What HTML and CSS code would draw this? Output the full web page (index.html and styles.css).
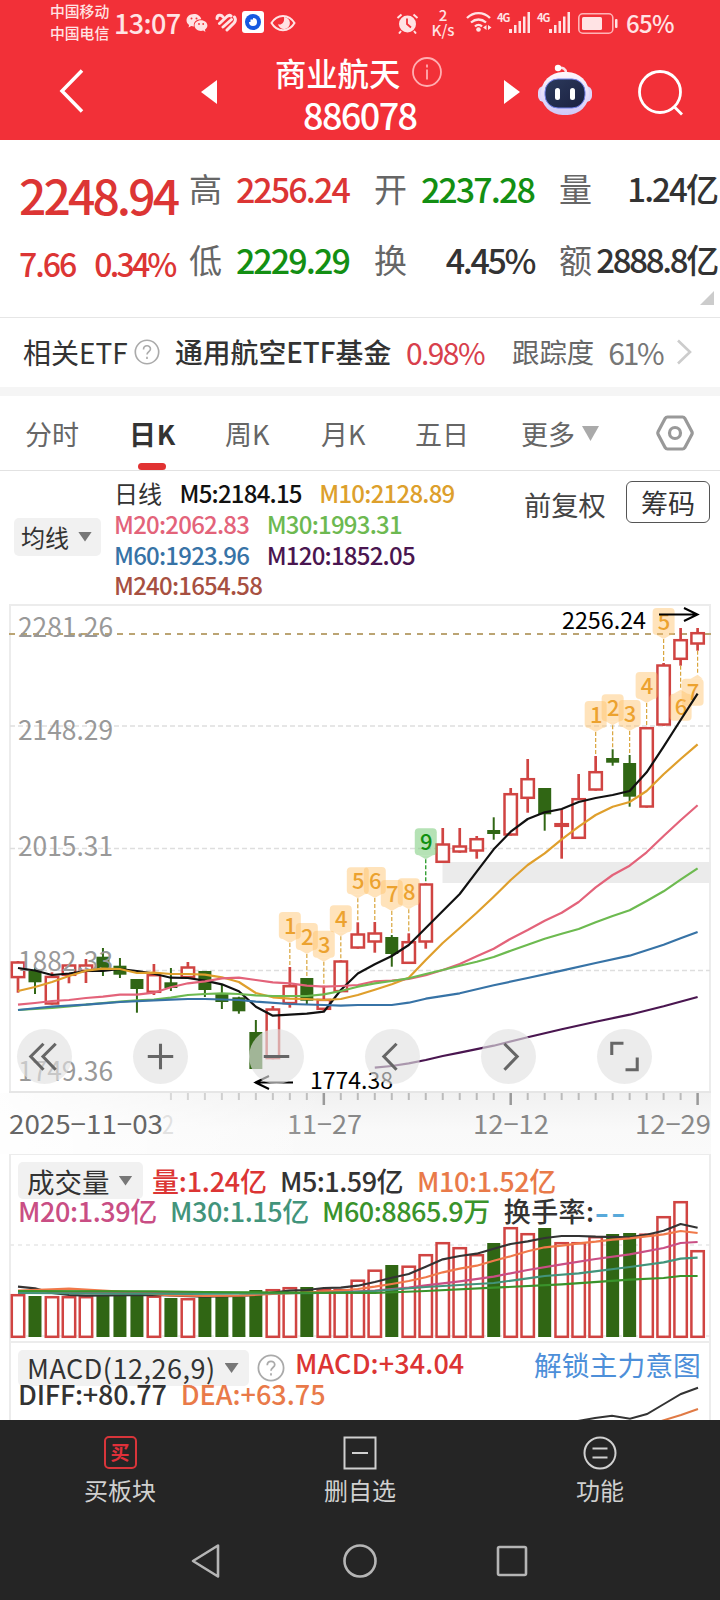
FILE: index.html
```html
<!DOCTYPE html>
<html lang="zh-CN">
<head>
    <meta charset="UTF-8">
    <meta name="viewport" content="width=device-width, initial-scale=1.0">
    <title>商业航天 886078</title>
    <link rel="stylesheet" href="styles.css">
</head>
<body>

    <header class="top">
        <div class="status">
            <div class="carrier"><span>中国移动</span><span>中国电信</span></div>
            <span class="clock">13:07</span>
            <svg class="st-wechat" width="22" height="20" viewBox="0 0 22 20">
                <path d="M8 1C3.600 1 .5 3.800.5 7.200c0 2 1 3.600 2.600 4.700L2.500 14.500l2.800-1.500c.9.300 1.700.4 2.700.4C7 9 10.500 6 15.300 6.200 14.500 3 11.500 1 8 1z"/>
                <path d="M15 7.300c-3.600 0-6.500 2.300-6.500 5.300s2.900 5.300 6.500 5.300c.8 0 1.500-.1 2.200-.3l2.300 1.300-.6-2.100c1.500-1 2.500-2.500 2.500-4.200 0-3-2.800-5.300-6.400-5.300z"/>
                <g fill="#f23038"><circle cx="5.500" cy="5.500" r="1"/><circle cx="10.500" cy="5.500" r="1"/><circle cx="13" cy="11" r=".9"/><circle cx="17.200" cy="11" r=".9"/></g>
            </svg>
            <svg class="st-heart" width="22" height="20" viewBox="0 0 22 20" fill="none" stroke-width="3" stroke-linecap="round">
                <path d="M2 5.500C2 2 6 1 8 4M4.500 10.500L12 3.500c1.500-1.300 3-1.300 4-.5M8 14l8.500-7.500M12 17l7-7c1.500-1.800 1.500-4.500.5-6"/>
            </svg>
            <svg class="st-app" width="22" height="22" viewBox="0 0 22 22">
                <rect width="22" height="22" rx="3"/><circle cx="11" cy="11" r="8" fill="#1759e0"/><path fill="#fff" d="M11 7a4 4 0 1 1-4 4h1.500V8.500H11z"/>
            </svg>
            <svg class="st-eye" width="26" height="18" viewBox="0 0 26 18">
                <path fill="none" stroke="#ffe3e4" stroke-width="2" d="M1.500 9C7-.5 19-.5 24.500 9 19 18.500 7 18.500 1.500 9z"/><path d="M14 3a6 6 0 1 1-6 7c2 1.500 7 0 6-7z"/>
            </svg>
            <svg class="st-alarm" width="23" height="21" viewBox="0 0 23 21">
                <circle cx="11.500" cy="11" r="8.500"/><path fill="none" stroke="#ffe3e4" stroke-width="2" d="M1.500 5l4-3.500M21.500 5l-4-3.500M5 18l-2 2.500M18 18l2 2.500"/><path fill="none" stroke="#f23038" stroke-width="1.800" d="M11 5.500V11l4 3.500"/>
            </svg>
            <div class="speed"><span>2</span><span>K/s</span></div>
            <svg class="st-wifi" width="26" height="22" viewBox="0 0 26 22">
                <path fill="none" stroke="#ffe3e4" stroke-width="2.300" d="M1 7C7.500.5 17.500.5 24 7M5 11.500c4.500-4 10.500-4 15 0M9 15.500c2-2 5-2 7 0"/><circle cx="12.500" cy="18.500" r="2.300"/><path d="M20.500 14v5L17 16.500zM22 14v5l3.500-2.500z"/>
            </svg>
            <div class="signal"><span>4G</span><svg width="22" height="21" viewBox="0 0 22 21"><path d="M0 17h3v4H0zM5 13h2.500v8H5zM9.500 9H12v12H9.500zM14 4.500h2.500V21H14zM18.500 0H21v21h-2.500z"/></svg></div>
            <div class="signal"><span>4G</span><svg width="22" height="21" viewBox="0 0 22 21"><path d="M0 17h3v4H0zM5 13h2.500v8H5zM9.500 9H12v12H9.500zM14 4.500h2.500V21H14zM18.500 0H21v21h-2.500z"/></svg></div>
            <svg class="st-battery" width="40" height="21" viewBox="0 0 40 21">
                <rect x=".8" y=".8" width="34" height="19.400" rx="4" fill="none" stroke="#ffb3b6" stroke-width="1.600"/><rect x="4" y="4" width="20" height="13" rx="1.500"/><rect x="37" y="6" width="2.500" height="9" rx="1"/>
            </svg>
            <span class="percent">65%</span>
        </div>
        <div class="titlebar">
            <svg class="back" width="26" height="46" viewBox="0 0 26 46"><path d="M23 2.500L3 23l20 20.500"/></svg>
            <span class="prev"></span>
            <div class="title">
                <div class="name">商业航天
                    <svg width="30" height="30" viewBox="0 0 30 30"><circle cx="15" cy="15" r="14"/><path d="M15 12.500v10M15 7.500v3"/></svg>
                </div>
                <div class="code">886078</div>
            </div>
            <span class="next"></span>
            <svg class="robot" width="54" height="52" viewBox="0 0 54 52">
                <defs>
                    <linearGradient id="shell" x1="0" y1="0" x2="0" y2="1"><stop offset="0" stop-color="#fff6fb"/><stop offset="1" stop-color="#cfc8f8"/></linearGradient>
                    <linearGradient id="face" x1="0" y1="0" x2="1" y2="1"><stop offset="0" stop-color="#2c3a5c"/><stop offset="1" stop-color="#1a2040"/></linearGradient>
                </defs>
                <path d="M20 4c5-1 8 1 8 5" fill="none" stroke="#fbdfe6" stroke-width="2.500"/><circle cx="20" cy="4" r="3.200" fill="#fff"/>
                <rect x="0" y="22" width="54" height="16" rx="6" fill="#ded6fa"/>
                <rect x="3" y="8" width="48" height="43" rx="21.500" fill="url(#shell)"/>
                <rect x="7" y="15" width="40" height="29" rx="13" fill="url(#face)" stroke="#6f7fe8" stroke-width="1"/>
                <rect x="17" y="24" width="5" height="12" rx="2.500" fill="#fff"/><rect x="32" y="24" width="5" height="12" rx="2.500" fill="#fff"/>
            </svg>
            <svg class="search" width="48" height="48" viewBox="0 0 48 48"><circle cx="22" cy="22" r="20.500"/><path d="M36 36.500l8 8"/></svg>
        </div>
    </header>

    <section class="quote">
        <div class="price">
            <div class="last red">2248.94</div>
            <div class="change red"><span>7.66</span><span>0.34%</span></div>
        </div>
        <dl class="pair p1"><dt>高</dt><dd class="red">2256.24</dd><dt>低</dt><dd class="green">2229.29</dd></dl>
        <dl class="pair p2"><dt>开</dt><dd class="green">2237.28</dd><dt>换</dt><dd class="rate">4.45%</dd></dl>
        <dl class="pair p3"><dt>量</dt><dd>1.24亿</dd><dt>额</dt><dd class="tight">2888.8亿</dd></dl>
        <i class="corner"></i>
    </section>

    <section class="etf">
        <span class="etf-label">相关ETF</span>
        <svg class="help" width="26" height="26" viewBox="0 0 30 30"><circle cx="15" cy="15" r="13.500"/><path d="M11 12c0-5.500 8-5.500 8-.5 0 3-4 3-4 6.500M15 20.500v2.500"/></svg>
        <span class="etf-name">通用航空ETF基金</span>
        <span class="etf-rate">0.98%</span>
        <span class="etf-track">跟踪度</span>
        <span class="etf-pct">61%</span>
        <svg class="more" width="16" height="26" viewBox="0 0 16 26"><path d="M2 1.500L14 13 2 24.500"/></svg>
    </section>

    <nav class="tabs">
        <span class="t1">分时</span>
        <span class="t2 active">日K</span>
        <span class="t3">周K</span>
        <span class="t4">月K</span>
        <span class="t5">五日</span>
        <span class="t6">更多<i></i></span>
        <svg class="gear" width="38" height="38" viewBox="0 0 38 38"><path d="M11.500 3h15q1.500 0 2.300 1.300l7 13.200q.8 1.500 0 3l-7 13.200Q28 35 26.500 35h-15q-1.500 0-2.300-1.300l-7-13.200q-.8-1.500 0-3l7-13.200Q10 3 11.500 3z"/><circle cx="19" cy="19" r="5.500"/></svg>
    </nav>

    <section class="legend">
        <span class="pill ma-pill">均线<i></i></span>
        <div class="ma">
            <div><span class="day">日线</span><span class="m5">M5:2184.15</span><span class="m10">M10:2128.89</span></div>
            <div><span class="m20">M20:2062.83</span><span class="m30">M30:1993.31</span></div>
            <div><span class="m60">M60:1923.96</span><span class="m120">M120:1852.05</span></div>
            <div><span class="m240">M240:1654.58</span></div>
        </div>
        <span class="adjust">前复权</span>
        <span class="chips">筹码</span>
    </section>

    <section class="kline">
        <svg id="kline" width="720" height="550" viewBox="0 604 720 550"></svg>
        <div class="tools">
            <span><svg viewBox="0 0 54 54"><path d="M26 14.500L13.500 27 26 40M38 14.500L25.500 27 38 40"/></svg></span>
            <span><svg viewBox="0 0 54 54"><path d="M27 14.500v25M14.500 27h25"/></svg></span>
            <span><svg viewBox="0 0 54 54"><path d="M14.500 27h25"/></svg></span>
            <span><svg viewBox="0 0 54 54"><path d="M31 14.500L18.500 27 31 40"/></svg></span>
            <span><svg viewBox="0 0 54 54"><path d="M23 14.500L35.500 27 23 40"/></svg></span>
            <span><svg viewBox="0 0 54 54"><path d="M26 14H14.500v11.500M28 40h11.500V28"/></svg></span>
        </div>
    </section>

    <section class="volume">
        <svg id="volume" width="720" height="187" viewBox="0 1154 720 187"></svg>
        <div class="row v-row1">
            <span class="pill vol-pill">成交量<i></i></span>
            <span class="red v0">量:1.24亿</span><span class="v5">M5:1.59亿</span><span class="v10">M10:1.52亿</span>
        </div>
        <div class="row v-row2">
            <span class="v20">M20:1.39亿</span><span class="v30">M30:1.15亿</span><span class="v60">M60:8865.9万</span><span class="turn">换手率:</span><span class="dash">--</span>
        </div>
    </section>

    <section class="macd">
        <svg id="macd" width="720" height="79" viewBox="0 1341 720 79"></svg>
        <div class="row m-row1">
            <span class="pill macd-pill">MACD(12,26,9)<i></i></span>
            <svg class="help big" width="28" height="28" viewBox="0 0 30 30"><circle cx="15" cy="15" r="13.500"/><path d="M11 12c0-5.500 8-5.500 8-.5 0 3-4 3-4 6.500M15 20.500v2.500"/></svg>
            <span class="red macd-val">MACD:+34.04</span>
            <span class="unlock">解锁主力意图</span>
        </div>
        <div class="row m-row2"><span class="diff">DIFF:+80.77</span><span class="v10 dea">DEA:+63.75</span></div>
    </section>

    <footer class="bottom">
        <div class="actions">
            <div class="buy">
                <span class="buy-icon">买</span>
                买板块
            </div>
            <div>
                <svg width="34" height="34" viewBox="0 0 34 34"><rect x="1.500" y="1.500" width="31" height="31"/><path d="M9 17h16"/></svg>
                删自选
            </div>
            <div>
                <svg width="34" height="34" viewBox="0 0 34 34"><circle cx="17" cy="17" r="15.500"/><path d="M9.500 12.500h15M9.500 21.500h15"/></svg>
                功能
            </div>
        </div>
        <div class="keys">
            <svg width="34" height="36" viewBox="0 0 34 36"><path d="M30 2.500v31L5 18z"/></svg>
            <svg width="36" height="36" viewBox="0 0 36 36"><circle cx="18" cy="18" r="15.500"/></svg>
            <svg width="34" height="34" viewBox="0 0 34 34"><rect x="3" y="3" width="28" height="28" rx="1.500"/></svg>
        </div>
    </footer>

    <script src="chart.js"></script>
</body>
</html>
```
FILE: styles.css
```css
* {
    box-sizing: border-box;
}

body {
    font-family: "Noto Sans CJK SC", sans-serif;
    margin: 0;
    width: 720px;
    height: 1600px;
    overflow: hidden;
    background: #fff;
    color: #333;
    line-height: 1;
    white-space: nowrap;
}

svg {
    display: block;
    flex: none;
}

.red { color: #dc3534; }
.green { color: #138f13; }

/* header */
.top {
    height: 140px;
    background: #f23038;
    color: #fff;
}

.status {
    display: flex;
    align-items: center;
    height: 46px;
    padding-left: 50px;
    color: #ffe3e4;
    fill: #ffe3e4;
}

.carrier {
    display: flex;
    flex-direction: column;
    width: 60px;
    padding-bottom: 1px;
    font-size: 14.8px;
    font-weight: 500;
    gap: 7px;
}

.clock {
    width: 70px;
    margin-left: 4px;
    padding-bottom: 2px;
    font-size: 27px;
    font-weight: 500;
    letter-spacing: -0.6px;
}

.st-wechat { margin-left: 2px; }
.st-heart { margin-left: 7px; stroke: #ffe3e4; }
.st-app { margin-left: 5px; margin-bottom: 2px; fill: #fff; }
.st-eye { margin-left: 6px; }
.st-alarm { margin-left: 100px; }

.speed {
    display: flex;
    flex-direction: column;
    align-items: center;
    width: 24px;
    margin-left: 12px;
    padding-bottom: 2px;
    font-size: 15px;
    font-weight: 500;
}

.st-wifi { margin-left: 11px; margin-bottom: 2px; }

.signal {
    display: flex;
    width: 34px;
    margin-left: 5px;
    margin-bottom: 2px;
}

.signal + .signal { margin-left: 6px; }

.signal span {
    width: 12px;
    font-size: 11px;
    font-weight: 700;
    letter-spacing: -1px;
    line-height: 10px;
}

.st-battery { margin-left: 7px; }

.percent {
    margin-left: 8px;
    font-size: 24px;
    font-weight: 500;
    letter-spacing: -0.7px;
}

.titlebar {
    display: flex;
    height: 94px;
}

.back {
    margin: 22px 0 0 59px;
    fill: none;
    stroke: #fff;
    stroke-width: 3.5;
}

.prev,
.next {
    width: 16px;
    height: 24px;
    margin-top: 34px;
    background: #fff;
}

.prev {
    margin-left: 116px;
    clip-path: polygon(100% 0, 0 50%, 100% 100%);
}

.next {
    margin-left: 57px;
    clip-path: polygon(0 0, 100% 50%, 0 100%);
}

.title {
    width: 172px;
    margin-left: 58px;
}

.name {
    display: flex;
    height: 50px;
    padding-top: 11px;
    font-size: 31.3px;
    font-weight: 500;
}

.name svg {
    margin: 0 0 0 12px;
    fill: none;
    stroke: #ffaeb1;
    stroke-width: 1.8;
}

.code {
    padding-left: 28px;
    font-size: 36px;
    font-weight: 500;
    letter-spacing: -1.6px;
}

.robot { margin: 18px 0 0 18px; }

.search {
    margin: 24px 0 0 46px;
    fill: none;
    stroke: #fff;
    stroke-width: 2.8;
}

/* quote */
.quote {
    position: relative;
    display: flex;
    height: 178px;
    border-bottom: 1px solid #e6e6e6;
}

.price {
    width: 190px;
    padding-left: 19px;
    font-weight: 500;
}

.last {
    height: 98px;
    padding-top: 30px;
    font-size: 48px;
    letter-spacing: -2.9px;
}

.change {
    display: flex;
    font-size: 32px;
    gap: 19px;
    padding-top: 9px;
    letter-spacing: -2px;
}

.change span + span { letter-spacing: -2.8px; }

.pair {
    display: grid;
    grid-template-columns: 34px 1fr;
    grid-auto-rows: 71px;
    margin: 32px 0 0;
}

.p1 { width: 160px; margin-left: -1px; }
.p2 { width: 160px; margin-left: 25px; }
.p3 { width: 160px; margin-left: 25px; }

dt {
    font-size: 33px;
    color: #666;
}

dd {
    margin: 0;
    text-align: right;
    font-size: 34px;
    font-weight: 500;
    letter-spacing: -1.9px;
}

.rate { letter-spacing: -2.4px; }
.p3 dd { font-size: 33px; padding-right: 2px; }
.p3 .tight { letter-spacing: -2.3px; }

.corner {
    position: absolute;
    right: 6px;
    top: 151px;
    width: 14px;
    height: 14px;
    background: #ccc;
    clip-path: polygon(100% 0, 100% 100%, 0 100%);
}

/* related fund */
.etf {
    display: flex;
    align-items: center;
    height: 69px;
    padding: 0 0 2px 23px;
    font-size: 27px;
}

.etf-label { width: 104px; font-size: 28px; }

.help {
    margin: 1px 0 0 7px;
    fill: none;
    stroke: #aaa;
    stroke-width: 1.9;
}

.etf-name {
    width: 218px;
    margin-left: 15px;
    font-size: 27.8px;
    font-weight: 500;
}

.etf-rate {
    width: 78px;
    margin-left: 13px;
    font-size: 30px;
    letter-spacing: -1.6px;
    color: #d8404c;
}

.etf-track {
    margin-left: 28px;
    color: #666;
    font-size: 27.4px;
}

.etf-pct {
    width: 56px;
    margin-left: 14px;
    font-size: 30px;
    letter-spacing: -2.2px;
    color: #777;
}

.more {
    margin: 1px 0 0 12px;
    fill: none;
    stroke: #ccc;
    stroke-width: 2.6;
}

/* period tabs */
.tabs {
    display: flex;
    height: 84px;
    border-top: 9px solid #f5f5f5;
    border-bottom: 1px solid #e2e2e2;
    font-size: 27px;
    color: #666;
}

.tabs span {
    padding-top: 24px;
}

.t1 { width: 55px; margin-left: 25px; }
.t2 { width: 48px; margin-left: 49px; }
.t3 { width: 46px; margin-left: 48px; }
.t4 { width: 46px; margin-left: 50px; }
.t5 { width: 54px; margin-left: 48px; }

.t6 {
    display: flex;
    width: 80px;
    margin-left: 52px;
}

.t6 i {
    width: 17px;
    height: 15px;
    margin: 6px 0 0 7px;
    background: #aaa;
    clip-path: polygon(0 0, 100% 0, 50% 100%);
}

.tabs .active {
    position: relative;
    font-weight: 700;
    color: #333;
    letter-spacing: 0.7px;
}

.active::after {
    content: "";
    position: absolute;
    left: 9px;
    bottom: 0;
    width: 28px;
    height: 7px;
    border-radius: 3.5px;
    background: #e13232;
}

.gear {
    margin: 18px 0 0 55px;
    fill: none;
    stroke: #999;
    stroke-width: 3.2;
}

/* moving average legend */
.legend {
    display: flex;
    height: 133px;
    padding-left: 14px;
}

.pill {
    display: flex;
    align-items: center;
    background: #f1f1f1;
    border-radius: 5px;
}

.pill i {
    width: 14px;
    height: 10px;
    background: #777;
    clip-path: polygon(0 0, 100% 0, 50% 100%);
}

.ma-pill {
    width: 87px;
    height: 38px;
    margin-top: 47px;
    padding: 0 0 1px 7px;
    font-size: 24px;
    gap: 9px;
}

.ma {
    width: 410px;
    margin-left: 13px;
    padding-top: 8px;
    font-size: 24px;
    font-weight: 500;
    letter-spacing: -0.77px;
}

.ma div {
    display: flex;
    height: 30.8px;
    line-height: 28px;
    gap: 17.5px;
}

.day { font-weight: 400; letter-spacing: 0; }
.m5 { color: #111; }
.m10 { color: #dda02c; }
.m20 { color: #e3637a; }
.m30 { color: #6db951; }
.m60 { color: #3773a6; }
.m120 { color: #4a1650; }
.m240 { color: #a75041; }

.adjust {
    padding-top: 20px;
    font-size: 27.3px;
    color: #444;
}

.chips {
    width: 84px;
    height: 42px;
    margin: 10px 0 0 20px;
    padding-top: 7px;
    border: 1.5px solid #555;
    border-radius: 6px;
    text-align: center;
    font-size: 27px;
}

/* candle chart */
.kline {
    position: relative;
    height: 550px;
}

.tools {
    position: absolute;
    left: 17px;
    top: 425px;
    display: flex;
    gap: 61px;
}

.tools span {
    width: 55px;
    height: 55px;
    border-radius: 50%;
    background: rgba(225, 225, 225, 0.64);
}

.tools svg {
    fill: none;
    stroke: #666;
    stroke-width: 3;
}

/* volume and macd */
.volume,
.macd {
    position: relative;
}

.volume { height: 187px; }

.macd {
    height: 79px;
    overflow: hidden;
}

.volume > svg,
.macd > svg {
    position: absolute;
    left: 0;
    top: 0;
}

.row {
    position: relative;
    display: flex;
    font-size: 27px;
    font-weight: 500;
}

.v-row1 {
    height: 46px;
    padding: 8px 0 0 18px;
    line-height: 38px;
}

.vol-pill {
    width: 125px;
    height: 37px;
    padding-left: 9px;
    font-size: 27.5px;
    font-weight: 400;
    gap: 9px;
}

.v-row1 .v0 { width: 116px; margin-left: 9px; letter-spacing: -0.2px; }
.v-row1 .v5 { width: 122px; margin-left: 12px; letter-spacing: -0.5px; }
.v-row1 .v10 { margin-left: 15px; letter-spacing: -0.4px; }
.v-row2 { padding-left: 18px; line-height: 22px; letter-spacing: -0.4px; }
.v-row2 span { width: 138px; margin-right: 14px; }
.v-row2 .v60 { width: 168px; margin-right: 14px; letter-spacing: -0.5px; }
.v-row2 .turn { width: 93px; margin-right: 0; letter-spacing: 0.4px; }
.v-row2 .dash { font-size: 42px; font-weight: 400; line-height: 18px; letter-spacing: 2px; }
.v10 { color: #e97a49; }
.v20 { color: #c94e84; }
.v30 { color: #42947b; }
.v60 { color: #3a932b; }
.dash { color: #58a9da; }

.m-row1 {
    height: 43px;
    padding: 9px 0 0 18px;
    line-height: 26px;
}

.macd-pill {
    width: 231px;
    height: 36px;
    padding-left: 9px;
    gap: 9px;
    letter-spacing: 0.5px;
    font-weight: 400;
}

.big { margin: 4px 0 0 8px; }
.macd-val { width: 237px; margin-left: 10px; letter-spacing: 0.1px; }
.unlock { margin-left: 2px; color: #4d8fd9; font-size: 27.8px; font-weight: 400; line-height: 28px; }
.m-row2 { padding-left: 18px; line-height: 20px; letter-spacing: -0.2px; }
.dea { margin-left: 14px; letter-spacing: 0; }

/* bottom bars */
.bottom {
    position: relative;
    height: 180px;
    background: #252525;
}

.actions {
    display: flex;
    height: 108px;
    padding-top: 16px;
    color: #d0d0d0;
    font-size: 24px;
}

.actions div {
    display: flex;
    flex-direction: column;
    align-items: center;
    width: 240px;
    gap: 8px;
}

.actions svg {
    fill: none;
    stroke: #d0d0d0;
    stroke-width: 2;
}

.buy-icon {
    width: 33px;
    height: 33px;
    margin-bottom: 1px;
    border: 2px solid #d8353a;
    border-radius: 5px;
    color: #e0303a;
    font-size: 19px;
    font-weight: 700;
    line-height: 28px;
    text-align: center;
}

.keys {
    display: flex;
    align-items: center;
    padding: 15px 0 0 188px;
    fill: none;
    stroke: #b5b5b5;
    stroke-width: 2.6;
    stroke-linejoin: round;
}

.keys svg + svg { margin-left: 120px; }
.keys svg:last-child { margin-left: 117px; }

/* chart text */
.axis { font-size: 27px; fill: #999; }
.date { font-size: 26px; fill: #888; }
.peak { font-size: 23.500px; fill: #000; }
.mark { font-size: 22px; font-weight: 500; }
```
FILE: chart.js
```js
// type, high, body top, body bottom, low
var candles = [
    ["r", 961, 961.3, 978.3, 992.7], ["g", 967.3, 970.3, 982.3, 994], ["r", 972.3, 975.7, 1004.7, 1004.7],
    ["r", 964, 964.3, 976, 983.3], ["r", 959, 964.3, 972, 983], ["g", 948, 956.7, 970, 976],
    ["g", 958, 965.7, 974.7, 978], ["g", 979, 979, 989, 1012.7], ["r", 964, 974, 993, 995],
    ["g", 968, 982.3, 988, 991], ["r", 962, 966.3, 978.3, 978.3], ["g", 971, 971, 990, 997],
    ["g", 984.7, 993.3, 1002, 1009], ["g", 996.7, 997.3, 1011.3, 1013.7], ["g", 1020, 1032, 1069, 1069],
    ["r", 1006, 1008.3, 1059.3, 1059.3], ["r", 967, 985, 1004.3, 1007.7], ["g", 978, 978, 1000.7, 1004],
    ["r", 985.7, 998.7, 1010, 1011], ["r", 960.3, 960.3, 992.3, 992.3], ["r", 922.3, 933.3, 948.7, 948.7],
    ["r", 922, 932.3, 942.7, 952.7], ["g", 935, 937, 954, 966.7], ["r", 933.3, 941, 964, 964],
    ["r", 883.3, 883.3, 942.7, 948.7], ["r", 828, 843.3, 863, 863], ["r", 828, 845.3, 852.7, 852.7],
    ["r", 836, 838, 851.7, 858.7], ["g", 817.3, 830, 834, 839.7], ["r", 788, 793, 835.7, 835.7],
    ["r", 759, 778, 799, 812.7], ["g", 788, 788, 814.3, 830.7], ["r", 809.3, 823, 827, 858.7],
    ["r", 774, 798, 839, 839], ["r", 756, 771, 790.7, 790.7], ["g", 749.3, 758, 762.7, 765.7],
    ["g", 755, 763, 796.7, 806.7], ["r", 727, 727, 807.7, 807.7], ["r", 663, 664.3, 725.7, 725.7],
    ["r", 628, 639, 660, 665.7], ["r", 628, 632, 644.7, 650.7]
];

var volumes = [
    1294, 1296, 1296, 1296, 1296, 1295, 1295, 1295.5, 1295.5, 1298, 1298, 1296, 1296, 1296.7,
    1290, 1289, 1287, 1287, 1288.5, 1289, 1279.5, 1269.5, 1265, 1265.5, 1254, 1242, 1247, 1254,
    1243, 1227, 1233, 1228, 1242, 1242, 1236, 1234, 1233, 1233.5, 1216, 1201, 1250
];

var NS = "http://www.w3.org/2000/svg";
var RED = "#d04442";
var GREEN = "#306614";

function px(i) {
    return 18 + i * 16.99;
}

function add(parent, name, attrs, text) {
    var el = document.createElementNS(NS, name);
    for (var k in attrs) {
        el.setAttribute(k, attrs[k]);
    }
    if (text) {
        el.textContent = text;
    }
    parent.appendChild(el);
    return el;
}

function hline(svg, x1, x2, y, color, width, dash) {
    add(svg, "line", { x1: x1, x2: x2, y1: y, y2: y, stroke: color, "stroke-width": width, "stroke-dasharray": dash || "none" });
}

function vline(svg, x, y1, y2, color, width, dash) {
    add(svg, "line", { x1: x, x2: x, y1: y1, y2: y2, stroke: color, "stroke-width": width, "stroke-dasharray": dash || "none" });
}

function label(svg, cls, x, y, w, text, extra) {
    var attrs = { "class": cls, x: x, y: y, textLength: w, lengthAdjust: "spacingAndGlyphs" };
    for (var k in extra) {
        attrs[k] = extra[k];
    }
    add(svg, "text", attrs, text);
}

// values is a flat list of index, y
function curve(svg, values, color, width) {
    var pts = [];
    for (var i = 0; i < values.length; i += 2) {
        pts.push(px(values[i]) + "," + values[i + 1]);
    }
    add(svg, "polyline", { points: pts.join(" "), fill: "none", stroke: color, "stroke-width": width || 2.2, "stroke-linejoin": "round" });
}

// one y for every candle starting at index "from"
function series(from, ys) {
    var out = [];
    ys.forEach(function (y, i) {
        out.push(from + i, y);
    });
    return out;
}

function frame(svg, top, bottom) {
    hline(svg, 9, 711, top, "#ececec", 2);
    vline(svg, 10, top, bottom, "#ececec", 2);
    vline(svg, 710, top, bottom, "#ececec", 2);
}

function box(svg, i, type, top, bottom) {
    if (type == "g") {
        add(svg, "rect", { x: px(i) - 6.5, y: top, width: 13, height: bottom - top, fill: GREEN });
    } else {
        add(svg, "rect", { x: px(i) - 6.2, y: top + 1.2, width: 12.4, height: Math.max(bottom - top - 2.4, 1), fill: "#fff", stroke: RED, "stroke-width": 2.5 });
    }
}

function marker(svg, i, n, below) {
    var x = px(i);
    var c = candles[i];
    var nine = n == 9;
    var dir = below ? -1 : 1;
    var end = below ? c[4] : c[1];
    var tip = end - 24 * dir;
    var mx = i == 40 ? x - 5 : x;
    vline(svg, x, Math.min(tip, end), Math.max(tip, end), nine ? "#138f13" : "#d9a53c", 1.2, "4 2");
    add(svg, "rect", { x: mx - 11, y: below ? tip + 4 : tip - 31, width: 22, height: 27, rx: 4, fill: nine ? "#6cc66c" : "#ffc069", "fill-opacity": nine ? 0.5 : 0.45 });
    add(svg, "path", { d: "M" + (x - 7) + " " + (tip - 4 * dir) + "L" + x + " " + tip + "L" + (x + (i == 40 ? 5 : 7)) + " " + (tip - 4 * dir) + "z", fill: nine ? "#6cc66c" : "#ffc069", "fill-opacity": nine ? 0.5 : 0.45 });
    add(svg, "text", { "class": "mark", x: mx + 0.5, y: below ? tip + 25 : tip - 9, "text-anchor": "middle", fill: nine ? "#109010" : "#eca22f" }, String(n));
}

function drawKline() {
    var svg = document.getElementById("kline");
    var defs = add(svg, "defs", {});
    var g = add(defs, "linearGradient", { id: "strip", x1: 0, x2: 0, y1: 0, y2: 1 });
    add(g, "stop", { offset: 0, "stop-color": "#f1f1f1" });
    add(g, "stop", { offset: 0.6, "stop-color": "#f9f9f9" });
    add(g, "stop", { offset: 1, "stop-color": "#fafafa" });
    var f = add(defs, "linearGradient", { id: "fade" });
    add(f, "stop", { offset: 0, "stop-color": "#fff", "stop-opacity": 0.9 });
    add(f, "stop", { offset: 1, "stop-color": "#fff", "stop-opacity": 0 });

    add(svg, "rect", { x: 0, y: 1093, width: 711, height: 61, fill: "url(#strip)" });
    for (var i = 9; i <= 40; i++) {
        var major = i == 18 || i == 29 || i == 40;
        vline(svg, px(i), 1093, major ? 1105 : 1100, major ? "#999" : "#bbb", major ? 2.5 : 2);
    }
    label(svg, "date", 287, 1134, 75, "11−27");
    label(svg, "date", 473, 1134, 76, "12−12");
    label(svg, "date", 635, 1134, 76, "12−29");
    label(svg, "date", 162, 1134, 12, "2", { opacity: 0.4 });
    add(svg, "rect", { x: 0, y: 1093, width: 330, height: 61, fill: "url(#fade)" });
    label(svg, "date", 9, 1134, 154, "2025−11−03", { style: "fill:#666" });

    frame(svg, 605, 1092);
    hline(svg, 9, 711, 1092, "#e6e6e6", 2);
    [726, 848.5, 970.5].forEach(function (y) {
        hline(svg, 10, 710, y, "#dedede", 1.3, "5 3");
    });
    hline(svg, 9, 711, 634, "#bba473", 2, "6 6");
    add(svg, "rect", { x: 442.5, y: 862, width: 268.5, height: 21, fill: "#ebebeb" });

    candles.forEach(function (c, i) {
        var color = c[0] == "g" ? GREEN : RED;
        vline(svg, px(i), c[1], c[4], color, c[0] == "g" ? 2 : 2.7);
        box(svg, i, c[0], c[2], c[3]);
    });

    // price labels stay readable over the candles
    label(svg, "axis", 18, 637, 95, "2281.26");
    label(svg, "axis", 18, 740, 95, "2148.29");
    label(svg, "axis", 18, 856, 95, "2015.31");
    label(svg, "axis", 18, 970.5, 95, "1882.33");
    label(svg, "axis", 18, 1081, 95, "1749.36");

    for (var n = 1; n <= 9; n++) {
        marker(svg, 15 + n, n);
    }
    for (n = 1; n <= 5; n++) {
        marker(svg, 33 + n, n);
    }
    marker(svg, 39, 6, true);
    marker(svg, 40, 7, true);

    label(svg, "peak", 562, 629, 84, "2256.24");
    label(svg, "peak", 310, 1089, 83, "1774.38");
    add(svg, "path", { d: "M659 614.500H697M684 608l13.500 6.500L684 621M255 1082.500h38M269 1076l-13.500 6.500L269 1089", fill: "none", stroke: "#000", "stroke-width": 2 });

    curve(svg, [21, 1067.7, 22, 1066, 23, 1063.3, 24, 1060, 25, 1056, 26, 1052.7, 28, 1045.7, 30, 1037.3, 32, 1029.3, 34, 1021.7, 36, 1014.7, 38, 1006.3, 40, 997], "#4a1650");
    curve(svg, series(0, [968, 970.5, 975, 973.5, 971, 971, 969, 971, 973.7, 977.7, 978, 980.7, 984.3, 991.3, 1006.7, 1015.7, 1014.7, 1013.7, 1011.7, 990, 973.5, 964.3, 956, 945, 928, 911, 894, 871.7, 849.3, 831.7, 819, 812.3, 809, 802, 798, 795, 791, 772.3, 746.7, 720, 693.7]), "#111");
    curve(svg, series(0, [991, 987, 982, 976, 970.7, 968.7, 969, 973, 972.7, 974, 974, 974.7, 977.3, 982, 993, 997.3, 998.7, 999, 1000, 999, 995, 989.7, 984.3, 977.7, 960, 943, 928, 912.7, 896.7, 880, 865, 853.3, 839.3, 826.7, 815, 806.7, 802, 791, 774.3, 759, 744.3]), "#df9f2c");
    curve(svg, series(0, [1004.7, 1003, 1001, 1000, 998, 996.7, 994.7, 994.7, 992.7, 987.3, 983.3, 981.3, 978.3, 977.7, 980, 982.3, 983.3, 985.7, 986.7, 986, 985, 981.3, 980.7, 979, 975.3, 970, 964, 956.3, 948.7, 938.7, 930, 920.7, 912.7, 902, 887.3, 875, 865.7, 852.3, 836, 820.3, 805.3]), "#e3637a");
    curve(svg, series(0, [1010, 1009, 1008, 1006.5, 1004.7, 1003, 1001.7, 1000.3, 999.7, 997.7, 995, 994, 993.3, 994, 995.3, 996, 996, 996, 994.3, 991, 986.7, 983.3, 981, 978.3, 974, 970, 965.7, 961.7, 957, 950.7, 944.7, 938.7, 933.7, 929, 922.3, 916, 910.3, 901, 891.3, 879.7, 868.3]), "#6dba50");
    curve(svg, [0, 1010, 2, 1006.7, 4, 1004.7, 5, 1003.3, 6, 1002, 9, 999.7, 10, 999, 11, 999, 13, 1000, 14, 1001.7, 16, 1004, 18, 1005, 19, 1005.7, 20, 1005, 22, 1005, 23, 1002.7, 24, 998.7, 26, 993.3, 28, 985.3, 30, 978, 32, 970.7, 34, 963, 36, 955.7, 37, 950.3, 38, 944.7, 39, 938.3, 40, 932], "#3773a6");
}

function drawVolume() {
    var svg = document.getElementById("volume");
    frame(svg, 1154, 1341);
    hline(svg, 10, 710, 1245, "#e8e8e8", 1.6, "4 4");
    hline(svg, 10, 710, 1336, "#e8e8e8", 1.3, "4 4");
    volumes.forEach(function (y, i) {
        box(svg, i, candles[i][0], y, candles[i][0] == "g" ? 1337 : 1338);
    });
    curve(svg, [0, 1286.7, 1, 1288.3, 2, 1293, 3, 1295, 4, 1295.7, 8, 1295, 11, 1296.7, 13, 1296, 14, 1295, 15, 1292.7, 16, 1290.7, 17, 1290, 18, 1288, 19, 1287.7, 20, 1285.7, 21, 1282, 22, 1277.7, 23, 1274, 24, 1266.7, 25, 1259.3, 26, 1256, 27, 1253.7, 28, 1248.7, 29, 1244, 30, 1241.3, 31, 1238, 32, 1236, 33, 1236, 34, 1236.7, 36, 1237.3, 37, 1234.7, 38, 1230.7, 39, 1224, 40, 1227.7], "#333");
    curve(svg, [0, 1290.7, 2, 1289.3, 3, 1288.7, 5, 1290.7, 7, 1292.7, 9, 1295.3, 11, 1296, 13, 1295.7, 15, 1294, 17, 1292.7, 19, 1290.7, 20, 1289, 21, 1286.7, 22, 1284, 23, 1281, 24, 1277.3, 25, 1272.3, 26, 1268.7, 27, 1265.7, 28, 1260.7, 29, 1256.3, 30, 1251.3, 31, 1247.3, 32, 1245.7, 33, 1243.3, 34, 1241.7, 35, 1239.7, 36, 1238.3, 37, 1236.3, 38, 1234.3, 39, 1231, 40, 1233], "#f0794a");
    curve(svg, [0, 1291.5, 10, 1293, 18, 1293, 21, 1290.7, 23, 1287.7, 24, 1285.3, 26, 1281.3, 28, 1276.7, 30, 1270, 32, 1264.3, 34, 1259, 36, 1254.3, 38, 1248, 39, 1243, 40, 1242], "#c94e84");
    curve(svg, [0, 1293, 10, 1294, 18, 1293, 21, 1291, 24, 1287, 28, 1283, 30, 1278.3, 31, 1276, 33, 1273.3, 36, 1267, 38, 1262.3, 39, 1258.7, 40, 1257.7], "#42947b");
    curve(svg, [0, 1291, 8, 1291.3, 11, 1292, 16, 1292.7, 21, 1293, 24, 1291, 28, 1287.7, 32, 1284.3, 36, 1279.7, 38, 1278, 39, 1276, 40, 1276], "#3a932b");
}

function drawMacd() {
    var svg = document.getElementById("macd");
    frame(svg, 1342, 1420);
    add(svg, "polyline", { points: "578,1421 595,1418 612,1415.7 630,1418.7 647,1414 664,1404 681,1394 698,1387.700", fill: "none", stroke: "#333", "stroke-width": 2 });
    add(svg, "polyline", { points: "658,1422 681,1415 698,1409", fill: "none", stroke: "#e07a45", "stroke-width": 2 });
}

drawKline();
drawVolume();
drawMacd();
```
